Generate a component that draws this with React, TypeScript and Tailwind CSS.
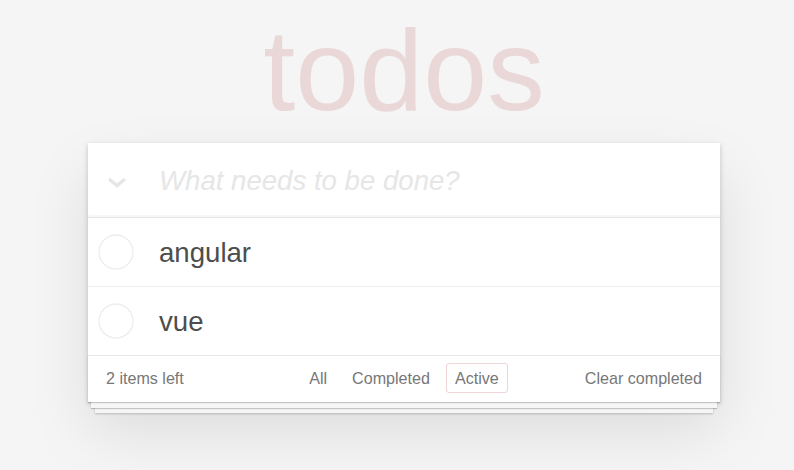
import React from "react";

export default function App() {
  const items = ["angular", "vue"];
  return (
    <div className="min-h-screen w-full bg-[#f5f5f5] font-['Liberation_Sans',Arial,sans-serif] text-[#4d4d4d]">
      <div className="ml-[88px] w-[632px] pt-[13px]">
        <h1 className="h-[115px] text-center text-[115px] font-thin leading-[115px] text-[rgba(175,47,47,0.15)]">
          todos
        </h1>
        <section className="relative mt-[15px] bg-white shadow-[0_2px_5px_0_rgba(0,0,0,0.2),0_29px_58px_0_rgba(0,0,0,0.1)]">
          <header className="flex h-[74px] items-center shadow-[inset_0_-2px_1px_rgba(0,0,0,0.03)]">
            <div className="flex w-[71px] shrink-0 items-center pl-[19px] pt-[4px]">
              <svg width="20" height="11" viewBox="0 0 20 11">
                <polyline
                  points="2,2 10,8.6 18,2"
                  fill="none"
                  stroke="#e6e6e6"
                  strokeWidth="3.2"
                  strokeLinecap="butt"
                  strokeLinejoin="miter"
                />
              </svg>
            </div>
            <input
              className="h-full min-w-0 flex-1 bg-transparent pt-[1px] text-[27.6px] text-[#4d4d4d] outline-none placeholder:italic placeholder:text-[#e6e6e6]"
              placeholder="What needs to be done?"
            />
          </header>
          <ul className="border-t border-[#e6e6e6]">
            {items.map((t, i) => (
              <li
                key={t}
                className={
                  "flex h-[68px] items-center " +
                  (i < items.length - 1 ? "box-content border-b border-[#ededed]" : "")
                }
              >
                <div className="flex w-[71px] shrink-0 items-center pl-[10px]">
                  <svg width="36" height="36" viewBox="0 0 36 36">
                    <circle cx="18" cy="18" r="17" fill="none" stroke="#ededed" strokeWidth="1.3" />
                  </svg>
                </div>
                <span className="text-[27.6px] leading-[33px] text-[#4d4d4d]">{t}</span>
              </li>
            ))}
          </ul>
          <footer className="relative grid h-[47px] grid-cols-[1fr_auto_1fr] items-center border-t border-[#e6e6e6] px-[18px] pb-[2px] text-[16.1px] text-[#777]">
            <div className="pointer-events-none absolute bottom-0 left-0 right-0 h-[46px] overflow-hidden shadow-[0_1px_1px_rgba(0,0,0,0.2),0_9px_0_-3px_#f6f6f6,0_10px_1px_-3px_rgba(0,0,0,0.2),0_18px_0_-7px_#f6f6f6,0_19px_2px_-7px_rgba(0,0,0,0.2)]" />
            <span className="relative justify-self-start">2 items left</span>
            <div className="relative flex items-center gap-[7px]">
              <span className="rounded-[3px] border border-transparent px-[8px] py-[2px]">All</span>
              <span className="rounded-[3px] border border-transparent px-[8px] py-[2px]">Completed</span>
              <span className="rounded-[3px] border border-[rgba(175,47,47,0.2)] px-[8px] py-[2px]">Active</span>
            </div>
            <span className="relative justify-self-end">Clear completed</span>
          </footer>
        </section>
      </div>
    </div>
  );
}
